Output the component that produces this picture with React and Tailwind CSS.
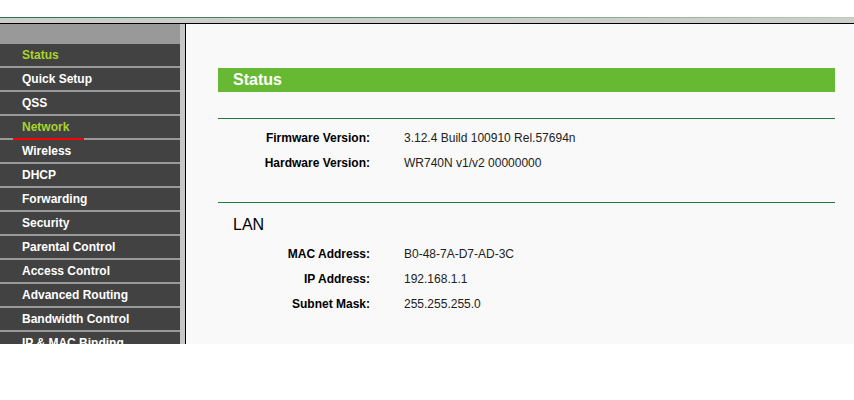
const menu = [
  { label: "Status", active: true },
  { label: "Quick Setup" },
  { label: "QSS" },
  { label: "Network", active: true, marked: true },
  { label: "Wireless" },
  { label: "DHCP" },
  { label: "Forwarding" },
  { label: "Security" },
  { label: "Parental Control" },
  { label: "Access Control" },
  { label: "Advanced Routing" },
  { label: "Bandwidth Control" },
  { label: "IP & MAC Binding" },
];

const InfoRow = ({ label, value }) => (
  <div className="flex h-[25px] items-center text-[12px]">
    <div className="w-[152px] text-right font-bold text-black">{label}</div>
    <div className="ml-[34px] text-[#222222]">{value}</div>
  </div>
);

const App = () => {
  return (
    <div className="h-[400px] w-[854px] overflow-hidden bg-white" style={{ fontFamily: '"Liberation Sans", Arial, sans-serif' }}>
      {/* top frame edge */}
      <div className="h-[17px]"></div>
      <div className="h-px bg-gradient-to-r from-[#2f6f4a] via-[#5f9a6a] to-[#b9d2aa]"></div>
      <div className="h-[5px] bg-[#cdcdcd]"></div>
      <div className="h-px bg-black"></div>

      <div className="flex h-[320px]">
        {/* Sidebar */}
        <div className="w-[180px] overflow-hidden bg-[#424242]">
          <div className="h-[20px] bg-[#999999]"></div>
          {menu.map((item) => (
            <div key={item.label} className="relative flex h-[24px] items-center border-b-2 border-[#9a9a9a] pl-[22px]">
              <span className={`text-[12px] font-bold ${item.active ? "text-[#a9d42c]" : "text-white"}`}>{item.label}</span>
              {item.marked && <span className="absolute bottom-[-2px] left-[13px] h-[2px] w-[71px] bg-[#ff0000]"></span>}
            </div>
          ))}
        </div>
        <div className="w-[5px] bg-[#c6c6c6]"></div>
        <div className="w-px bg-black"></div>

        {/* Content */}
        <div className="flex-1 bg-[#f9f9f9] pl-[32px] pr-[19px] pt-[44px]">
          <div className="flex h-[24px] items-center bg-[#67b934] pl-[15px] text-[16px] font-bold text-white">Status</div>

          <div className="mt-[26px] border-t border-[#1b7a3c]"></div>
          <div className="pt-[6px]">
            <InfoRow label="Firmware Version:" value="3.12.4 Build 100910 Rel.57694n" />
            <InfoRow label="Hardware Version:" value="WR740N v1/v2 00000000" />
          </div>

          <div className="mt-[27px] border-t border-[#1b7a3c]"></div>
          <div className="mt-[10px] flex h-[24px] items-center pl-[15px] text-[16px] text-black">LAN</div>
          <div className="pt-[4px]">
            <InfoRow label="MAC Address:" value="B0-48-7A-D7-AD-3C" />
            <InfoRow label="IP Address:" value="192.168.1.1" />
            <InfoRow label="Subnet Mask:" value="255.255.255.0" />
          </div>
        </div>
      </div>
    </div>
  );
};

export default App;
